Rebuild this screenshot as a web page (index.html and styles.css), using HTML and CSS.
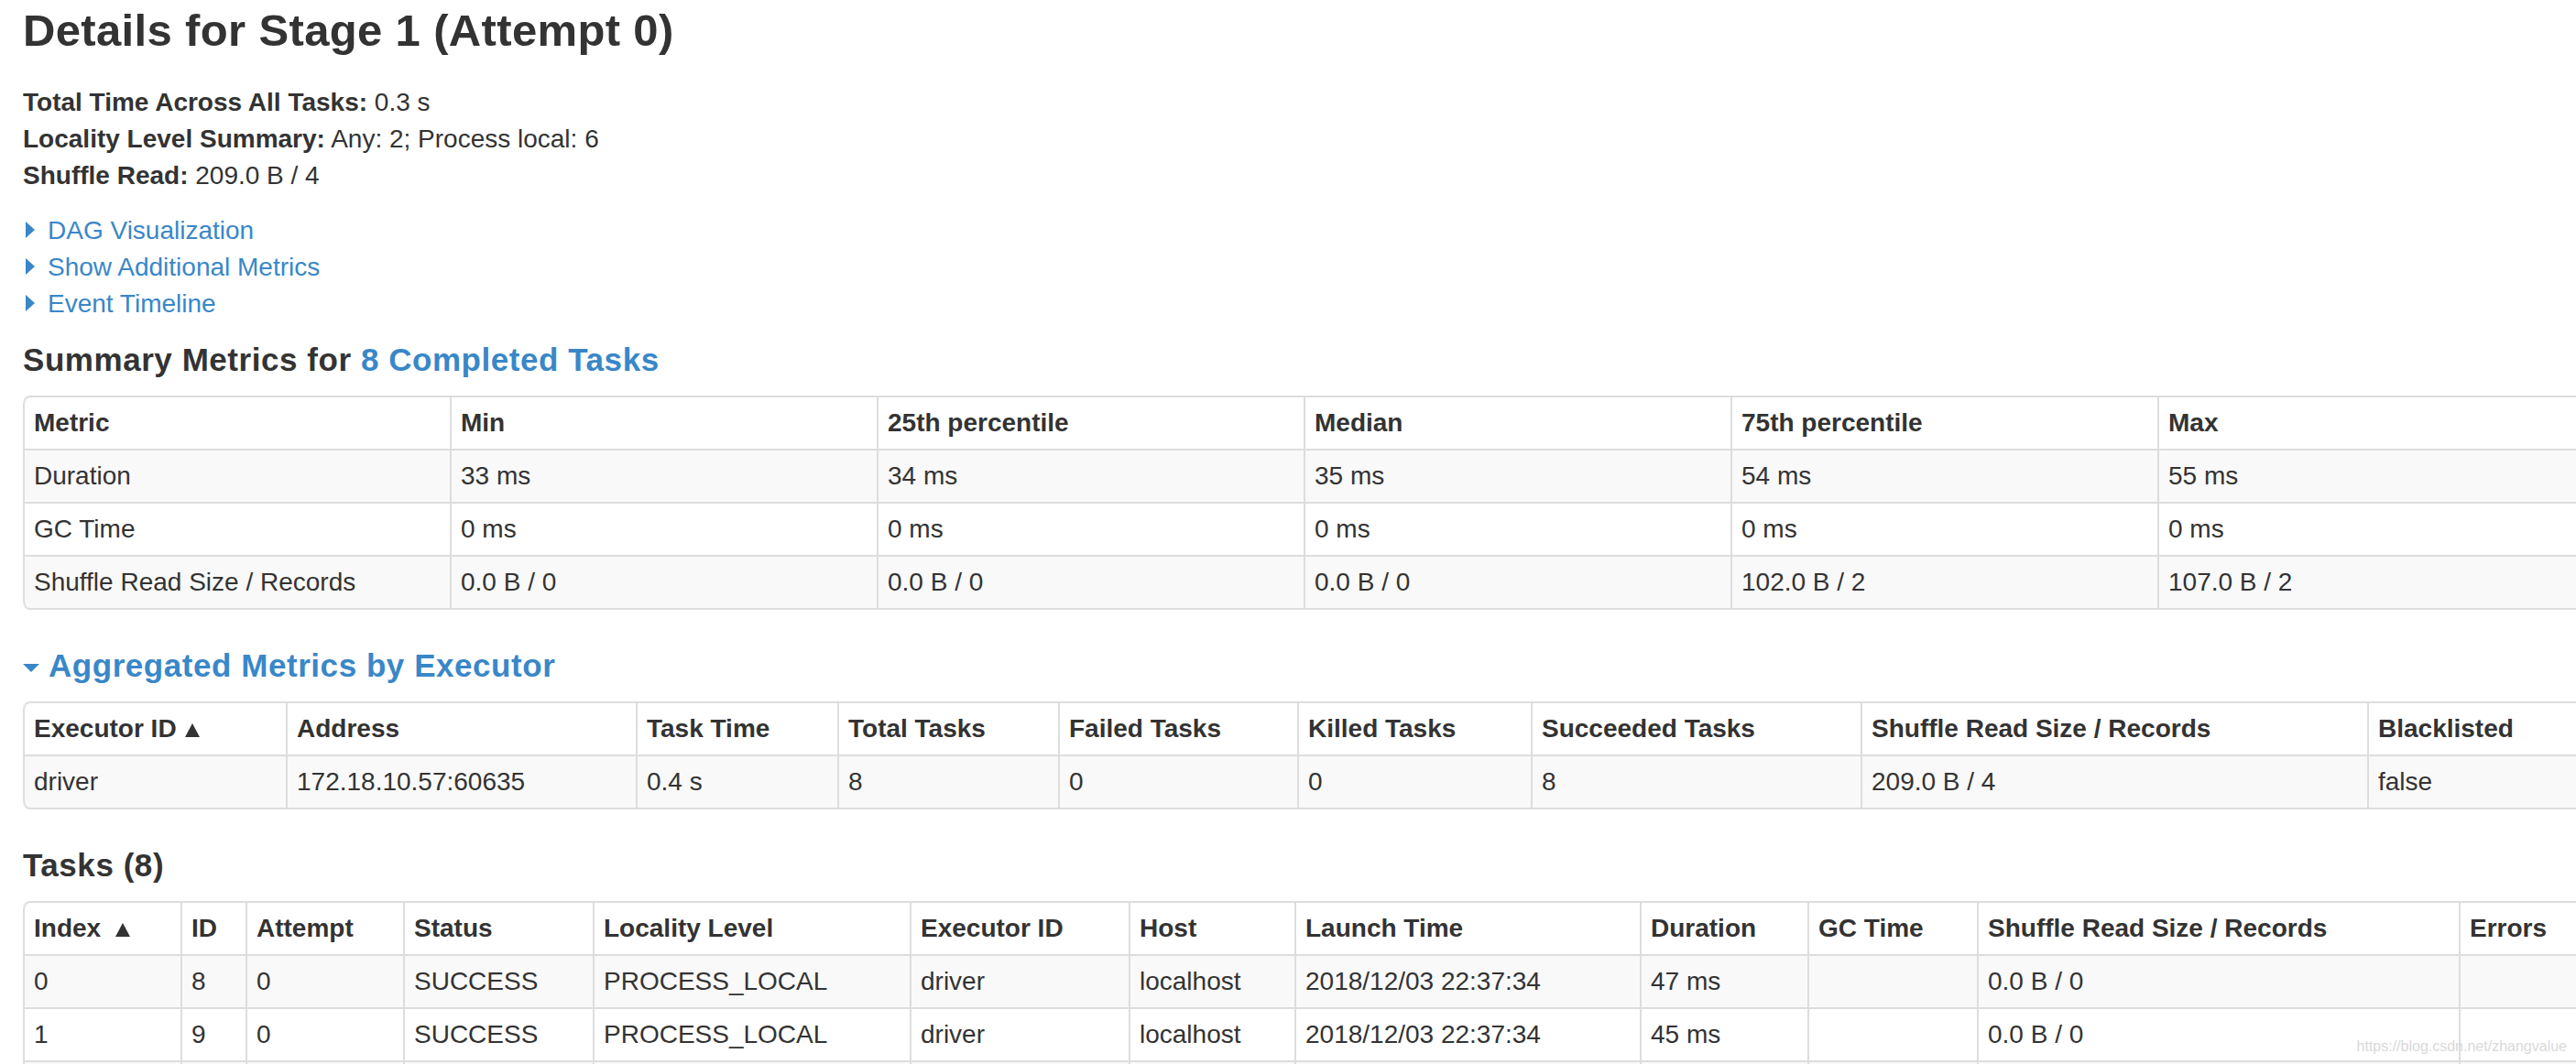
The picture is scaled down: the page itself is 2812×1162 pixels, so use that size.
FILE: index.html
```html
<!DOCTYPE html>
<html lang="en">
<head>
<meta charset="utf-8">
<title>Details for Stage 1 (Attempt 0)</title>
<link rel="stylesheet" href="styles.css">
</head>
<body>
<div class="page">
  <h3 class="page-title">Details for Stage 1 (Attempt 0)</h3>

  <ul class="summary">
    <li><strong>Total Time Across All Tasks:</strong> 0.3 s</li>
    <li><strong>Locality Level Summary:</strong> Any: 2; Process local: 6</li>
    <li><strong>Shuffle Read:</strong> 209.0 B / 4</li>
  </ul>

  <ul class="toggles">
    <li><span class="arrow-right"></span><a href="#">DAG Visualization</a></li>
    <li><span class="arrow-right"></span><a href="#">Show Additional Metrics</a></li>
    <li><span class="arrow-right"></span><a href="#">Event Timeline</a></li>
  </ul>

  <h4 class="heading">Summary Metrics for <a href="#">8 Completed Tasks</a></h4>
  <table class="grid summary-table">
    <thead>
      <tr><th>Metric</th><th>Min</th><th>25th percentile</th><th>Median</th><th>75th percentile</th><th>Max</th></tr>
    </thead>
    <tbody>
      <tr><td>Duration</td><td>33 ms</td><td>34 ms</td><td>35 ms</td><td>54 ms</td><td>55 ms</td></tr>
      <tr><td>GC Time</td><td>0 ms</td><td>0 ms</td><td>0 ms</td><td>0 ms</td><td>0 ms</td></tr>
      <tr><td>Shuffle Read Size / Records</td><td>0.0 B / 0</td><td>0.0 B / 0</td><td>0.0 B / 0</td><td>102.0 B / 2</td><td>107.0 B / 2</td></tr>
    </tbody>
  </table>

  <h4 class="heading heading-gap"><span class="arrow-down"></span><a href="#">Aggregated Metrics by Executor</a></h4>
  <table class="grid exec-table">
    <thead>
      <tr>
        <th>Executor ID<svg class="sort" width="16" height="15" viewBox="0 0 16 15"><path d="M8 0 L16 15 L0 15 Z"/></svg></th>
        <th>Address</th><th>Task Time</th><th>Total Tasks</th><th>Failed Tasks</th><th>Killed Tasks</th><th>Succeeded Tasks</th><th>Shuffle Read Size / Records</th><th>Blacklisted</th>
      </tr>
    </thead>
    <tbody>
      <tr><td>driver</td><td>172.18.10.57:60635</td><td>0.4 s</td><td>8</td><td>0</td><td>0</td><td>8</td><td>209.0 B / 4</td><td>false</td></tr>
    </tbody>
  </table>

  <h4 class="heading heading-gap">Tasks (8)</h4>
  <table class="grid task-table">
    <thead>
      <tr>
        <th>Index<svg class="sort sort-wide" width="16" height="15" viewBox="0 0 16 15"><path d="M8 0 L16 15 L0 15 Z"/></svg></th>
        <th>ID</th><th>Attempt</th><th>Status</th><th>Locality Level</th><th>Executor ID</th><th>Host</th><th>Launch Time</th><th>Duration</th><th>GC Time</th><th>Shuffle Read Size / Records</th><th>Errors</th>
      </tr>
    </thead>
    <tbody>
      <tr><td>0</td><td>8</td><td>0</td><td>SUCCESS</td><td>PROCESS_LOCAL</td><td>driver</td><td>localhost</td><td>2018/12/03 22:37:34</td><td>47 ms</td><td></td><td>0.0 B / 0</td><td></td></tr>
      <tr><td>1</td><td>9</td><td>0</td><td>SUCCESS</td><td>PROCESS_LOCAL</td><td>driver</td><td>localhost</td><td>2018/12/03 22:37:34</td><td>45 ms</td><td></td><td>0.0 B / 0</td><td></td></tr>
      <tr class="next-row"><td></td><td></td><td></td><td></td><td></td><td></td><td></td><td></td><td></td><td></td><td></td><td></td></tr>
    </tbody>
  </table>
</div>
<div class="watermark">https://blog.csdn.net/zhangvalue</div>
</body>
</html>
```

FILE: styles.css
```css
html, body {
  margin: 0;
  padding: 0;
  overflow: hidden;
  background: #ffffff;
}

body {
  font-family: "Liberation Sans", "Helvetica Neue", Arial, sans-serif;
  font-size: 28px;
  line-height: 40px;
  color: #333333;
}

a {
  color: #3987c8;
  text-decoration: none;
}

.page {
  padding: 3px 0 0 25px;
  width: 2798px;
}

.page-title {
  margin: 0;
  font-size: 49px;
  line-height: 60px;
  font-weight: bold;
  letter-spacing: 0.35px;
}

.summary {
  list-style: none;
  margin: 29px 0 0;
  padding: 0;
}

.summary strong {
  font-weight: bold;
}

.toggles {
  list-style: none;
  margin: 20px 0 0;
  padding: 0;
}

.arrow-right {
  display: inline-block;
  width: 0;
  height: 0;
  border-top: 9px solid transparent;
  border-bottom: 9px solid transparent;
  border-left: 10px solid #3987c8;
  margin: 0 14px 1px 3px;
}

.heading {
  margin: 21px 0 0;
  font-size: 35px;
  line-height: 40px;
  font-weight: bold;
  letter-spacing: 0.55px;
}

.heading-gap {
  margin-top: 41px;
}

.arrow-down {
  display: inline-block;
  width: 0;
  height: 0;
  border-left: 9px solid transparent;
  border-right: 9px solid transparent;
  border-top: 9px solid #3987c8;
  margin: 0 10px 5px 0;
}

.grid {
  box-sizing: border-box;
  width: 2798px;
  table-layout: fixed;
  border-collapse: separate;
  border-spacing: 0;
  border: 2px solid #dddddd;
  border-left: 0;
  border-radius: 8px;
  margin-top: 19px;
}

.grid th,
.grid td {
  box-sizing: border-box;
  padding: 8px 10px;
  border-left: 2px solid #dddddd;
  border-top: 2px solid #dddddd;
  text-align: left;
  vertical-align: top;
  line-height: 40px;
  height: 58px;
  white-space: nowrap;
  overflow: hidden;
}

.grid thead th {
  border-top: 0;
  height: 56px;
  font-weight: bold;
  vertical-align: bottom;
}

.grid thead th:first-child {
  border-top-left-radius: 8px;
}

.grid tbody tr:last-child td:first-child {
  border-bottom-left-radius: 8px;
}

.grid tbody tr:nth-child(odd) td {
  background: #f9f9f9;
}

.sort {
  margin-left: 9px;
  fill: #333333;
}

.sort-wide {
  margin-left: 16px;
}

/* column widths */
.summary-table th { width: 466px; }

.exec-table th:nth-child(1) { width: 287px; }
.exec-table th:nth-child(2) { width: 382px; }
.exec-table th:nth-child(3) { width: 220px; }
.exec-table th:nth-child(4) { width: 241px; }
.exec-table th:nth-child(5) { width: 261px; }
.exec-table th:nth-child(6) { width: 255px; }
.exec-table th:nth-child(7) { width: 360px; }
.exec-table th:nth-child(8) { width: 553px; }
.exec-table th:nth-child(9) { width: 237px; }

.task-table th:nth-child(1) { width: 172px; }
.task-table th:nth-child(2) { width: 71px; }
.task-table th:nth-child(3) { width: 172px; }
.task-table th:nth-child(4) { width: 207px; }
.task-table th:nth-child(5) { width: 346px; }
.task-table th:nth-child(6) { width: 239px; }
.task-table th:nth-child(7) { width: 181px; }
.task-table th:nth-child(8) { width: 377px; }
.task-table th:nth-child(9) { width: 183px; }
.task-table th:nth-child(10) { width: 185px; }
.task-table th:nth-child(11) { width: 526px; }
.task-table th:nth-child(12) { width: 137px; }

.watermark {
  position: absolute;
  right: 10px;
  top: 1131px;
  font-family: "Liberation Sans", Arial, sans-serif;
  font-size: 16px;
  line-height: 24px;
  color: #d9d9d9;
}
```
